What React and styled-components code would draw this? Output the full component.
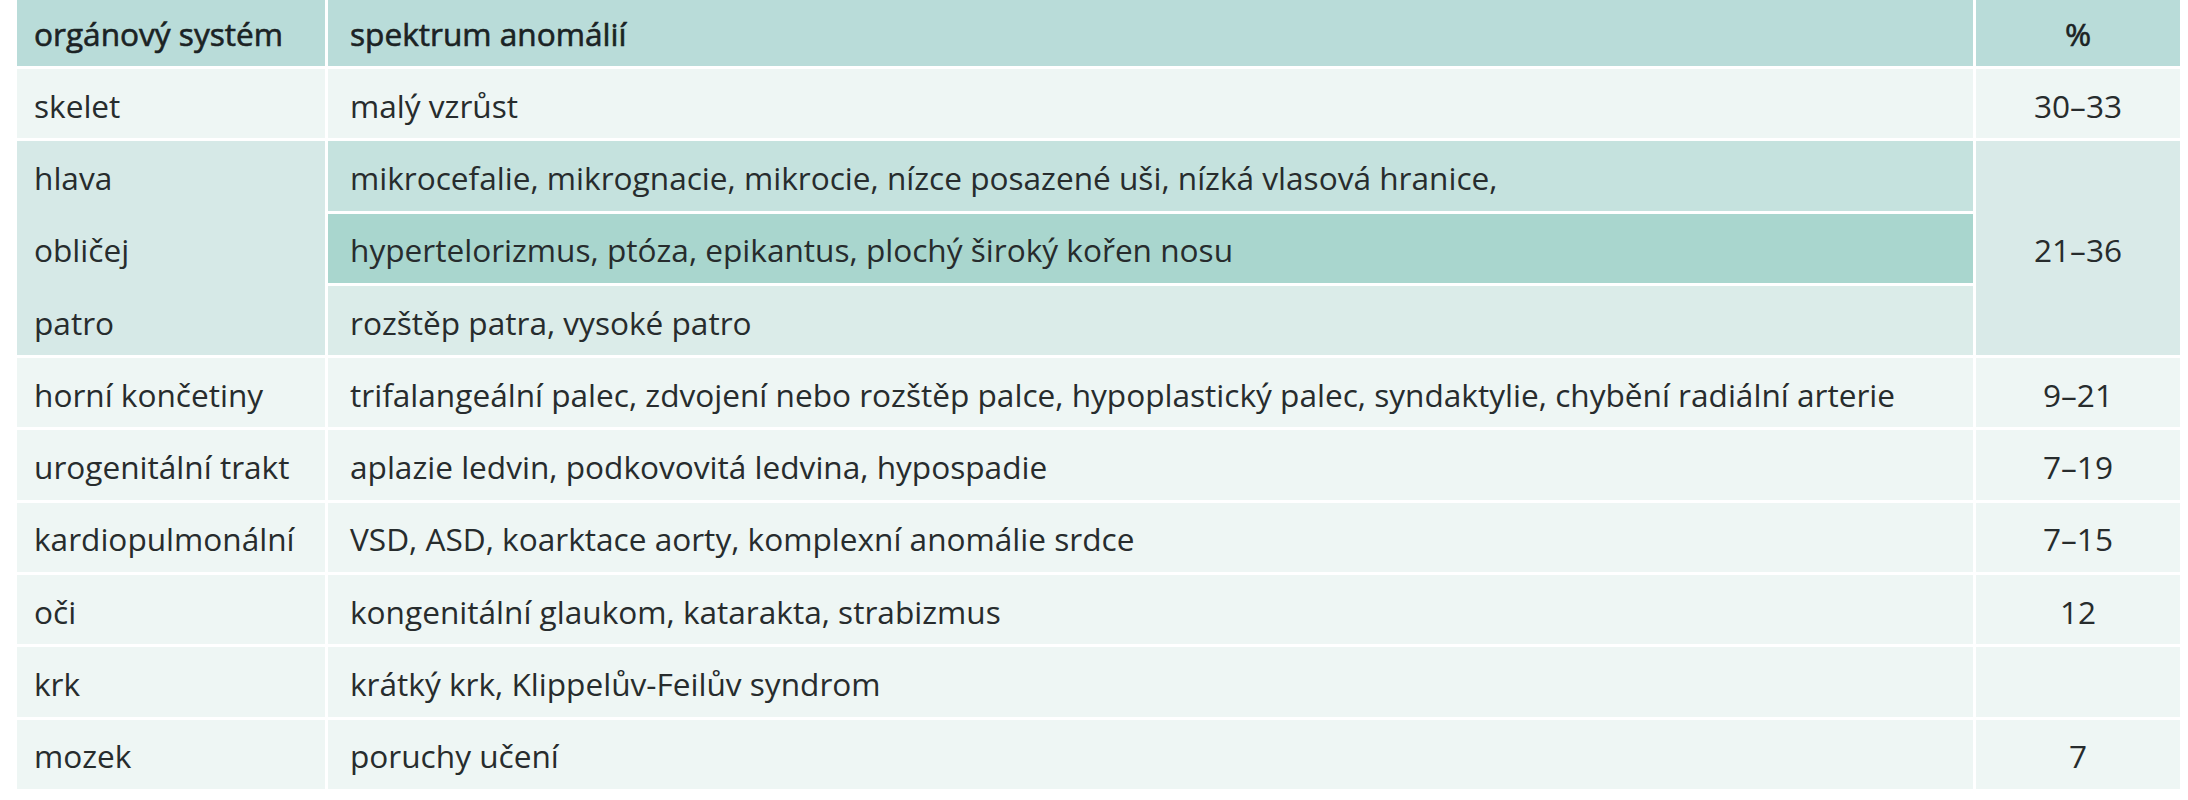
import React from 'react';
import styled, { createGlobalStyle } from 'styled-components';

const GlobalStyle = createGlobalStyle`
  body {
    margin: 0;
    background: #ffffff;
    font-family: "Open Sans", "Noto Sans", sans-serif;
    color: #272c2d;
  }
`;

const tones = {
  head: '#b9dcd9',
  light: '#eef6f4',
  group: '#d6e9e7',
  mint: '#c5e2de',
  deep: '#a9d6ce',
  pale: '#dbece9',
  side: '#d9eae8',
};

const Table = styled.div`
  display: grid;
  grid-template-columns: 308px 1645px 204px;
  grid-template-rows: 66px;
  grid-auto-rows: 69.3px;
  gap: 3px;
  margin-left: 17px;
  font-size: 31.6px;
  line-height: 1.2;
`;

const Cell = styled.div`
  display: flex;
  align-items: center;
  justify-content: ${({ $center }) => ($center ? 'center' : 'flex-start')};
  padding: 4px ${({ $center }) => ($center ? '0' : '18px')} 0
    ${({ $center, $wide }) => ($center ? '0' : $wide ? '22px' : '17px')};
  background: ${({ $tone }) => tones[$tone || 'light']};
  grid-row: ${({ $span }) => ($span ? `span ${$span}` : 'auto')};
  white-space: nowrap;
`;

// header text sits a touch heavier than the body but below semibold
const HeadCell = styled(Cell)`
  background: ${tones.head};
  color: #1b2324;
  -webkit-text-stroke: 0.6px #1b2324;
  padding-top: 2px;
`;

const StackCell = styled.div`
  display: grid;
  grid-template-rows: repeat(${({ $rows }) => $rows}, 1fr);
  row-gap: 3px;
  grid-row: span ${({ $rows }) => $rows};
  background: ${tones.group};
`;

const StackLine = styled.div`
  display: flex;
  align-items: center;
  padding: 4px 18px 0 17px;
  white-space: nowrap;
`;

const simpleRows = [
  ['skelet', 'malý vzrůst', '30–33'],
];

const group = {
  organs: ['hlava', 'obličej', 'patro'],
  spectrum: [
    ['mikrocefalie, mikrognacie, mikrocie, nízce posazené uši, nízká vlasová hranice,', 'mint'],
    ['hypertelorizmus, ptóza, epikantus, plochý široký kořen nosu', 'deep'],
    ['rozštěp patra, vysoké patro', 'pale'],
  ],
  value: '21–36',
};

const restRows = [
  [
    'horní končetiny',
    'trifalangeální palec, zdvojení nebo rozštěp palce, hypoplastický palec, syndaktylie, chybění radiální arterie',
    '9–21',
  ],
  ['urogenitální trakt', 'aplazie ledvin, podkovovitá ledvina, hypospadie', '7–19'],
  ['kardiopulmonální', 'VSD, ASD, koarktace aorty, komplexní anomálie srdce', '7–15'],
  ['oči', 'kongenitální glaukom, katarakta, strabizmus', '12'],
  ['krk', 'krátký krk, Klippelův-Feilův syndrom', ''],
  ['mozek', 'poruchy učení', '7'],
];

const Row = ({ organ, spectrum, value }) => (
  <>
    <Cell>{organ}</Cell>
    <Cell $wide>{spectrum}</Cell>
    <Cell $center>{value}</Cell>
  </>
);

export default function App() {
  return (
    <>
      <GlobalStyle />
      <Table>
        <HeadCell>orgánový systém</HeadCell>
        <HeadCell $wide>spektrum anomálií</HeadCell>
        <HeadCell $center>%</HeadCell>

        {simpleRows.map(([o, s, v]) => (
          <Row key={o} organ={o} spectrum={s} value={v} />
        ))}

        <StackCell $rows={3}>
          {group.organs.map((o) => (
            <StackLine key={o}>{o}</StackLine>
          ))}
        </StackCell>
        <Cell $wide $tone={group.spectrum[0][1]}>{group.spectrum[0][0]}</Cell>
        <Cell $center $span={3} $tone="side">{group.value}</Cell>
        {group.spectrum.slice(1).map(([text, tone]) => (
          <Cell key={text} $wide $tone={tone}>{text}</Cell>
        ))}

        {restRows.map(([o, s, v]) => (
          <Row key={o} organ={o} spectrum={s} value={v} />
        ))}
      </Table>
    </>
  );
}
